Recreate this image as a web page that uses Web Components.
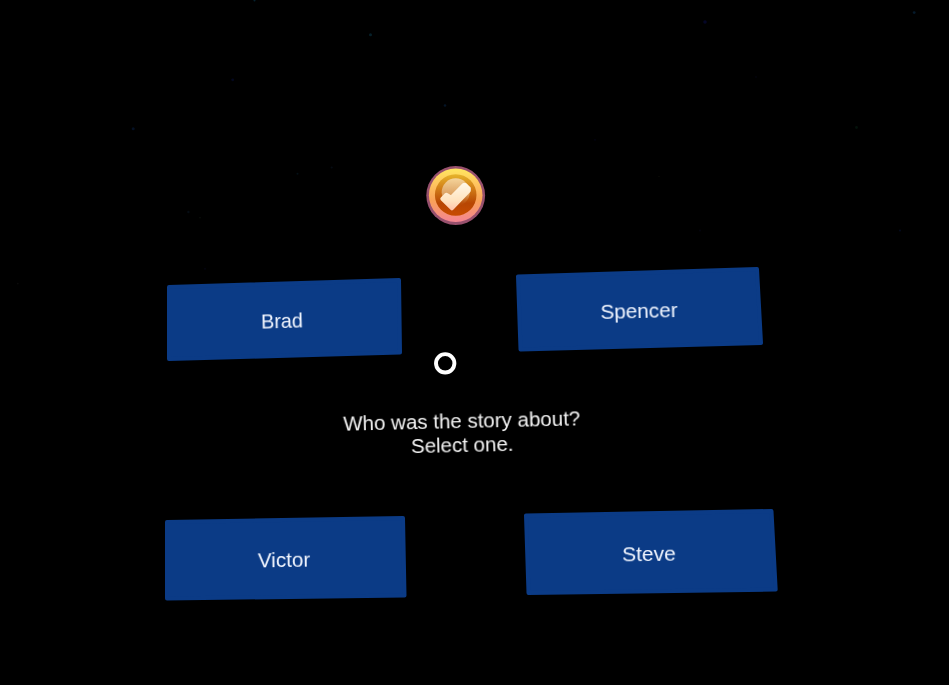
<!DOCTYPE html>
<html lang="en">
<head>
<meta charset="utf-8">
<title>Story quiz</title>
<style>
html, body { margin: 0; height: 100%; background: #000; overflow: hidden; }
</style>
</head>
<body>
<quiz-scene>
  <star-field></star-field>
  <check-badge style="left:425px;top:165px"></check-badge>
  <answer-panel points="168.5,287 398.5,280 399.5,352.5 168.5,359" cx="282" cy="321" size="19.8" tilt="-1.7">Brad</answer-panel>
  <answer-panel points="518,276.5 757,269 761,343 520.5,349.5" cx="638.5" cy="310.8" size="20.7" tilt="-1.5">Spencer</answer-panel>
  <gaze-cursor style="left:433px;top:351px"></gaze-cursor>
  <question-text style="left:312px;top:409.3px">
    <span>Who was the story about?</span>
    <span slot="hint">Select one.</span>
  </question-text>
  <answer-panel points="166.5,522 402.5,518 404,595.5 166.5,598.5" cx="284" cy="560" size="20.6" tilt="-.9">Victor</answer-panel>
  <answer-panel points="526,515.5 771.5,511 775.7,589.5 528.5,593" cx="649" cy="554" size="21" tilt="-.8">Steve</answer-panel>
</quiz-scene>
<script>
function define(name, html, setup) {
  customElements.define(name, class extends HTMLElement {
    connectedCallback() {
      if (this.shadowRoot) return;
      this.attachShadow({ mode: 'open' }).innerHTML = html;
      if (setup) setup(this, this.shadowRoot);
    }
  });
}

define('quiz-scene', `<style>
:host { display: block; position: relative; width: 949px; height: 685px; overflow: hidden; background: #000; color: #f2f6ff; font-family: "Liberation Sans", Arial, sans-serif; }
</style><slot></slot>`);

// Faint stars: x, y, radius, colour
const STARS = [[254.5,.5,1,'#05212e'],[370.5,34.8,1.5,'#06202a'],[232.7,79.8,1.4,'#040820'],[445,105.5,1.3,'#041426'],[133.2,128.7,1.5,'#041024'],[297.5,173.7,1,'#041016'],[331.7,167.5,1.1,'#050b12'],[188.4,212,1.2,'#050c13'],[200,217.7,.8,'#0c100c'],[205,268.8,1,'#04040f'],[17.8,283.6,.9,'#0b0b0b'],[705,22,1.8,'#040626'],[914.2,12.6,1.4,'#051a2b'],[756,77,.9,'#04040d'],[856.5,127.5,1.4,'#04120b'],[595,139.8,.9,'#040414'],[659,176.4,.7,'#0c0c08'],[700,230.5,1,'#04040e'],[900,230.5,1.1,'#040a1c']];
define('star-field', `<style>:host, svg { display: block; width: 100%; height: 100%; }</style>
<svg viewBox="0 0 949 685">${STARS.map(([x, y, r, c]) => `<circle cx="${x}" cy="${y}" r="${r}" fill="${c}"/>`).join('')}</svg>`);

// The panel box is the bounding box of its four corners; the label turns with the panel.
define('answer-panel', `<style>
:host { display: block; position: absolute; }
svg { display: block; width: 100%; height: 100%; overflow: visible; }
polygon { fill: #0b3b86; stroke: #0b3b86; stroke-width: 4; stroke-linejoin: round; filter: blur(.6px); }
.label { position: absolute; line-height: 24px; white-space: nowrap; filter: blur(.25px); }
</style><svg><polygon/></svg><div class="label"><slot></slot></div>`, (host, root) => {
  const pts = host.getAttribute('points').split(' ').map(p => p.split(',').map(Number));
  const xs = pts.map(p => p[0]), ys = pts.map(p => p[1]);
  const x = Math.min(...xs), y = Math.min(...ys), w = Math.max(...xs) - x, h = Math.max(...ys) - y;
  Object.assign(host.style, { left: x + 'px', top: y + 'px', width: w + 'px', height: h + 'px' });
  root.querySelector('svg').setAttribute('viewBox', `${x} ${y} ${w} ${h}`);
  root.querySelector('polygon').setAttribute('points', host.getAttribute('points'));
  Object.assign(root.querySelector('.label').style, {
    left: host.getAttribute('cx') - x + 'px', top: host.getAttribute('cy') - y + 'px',
    fontSize: host.getAttribute('size') + 'px',
    transform: `translate(-50%, -50%) rotate(${host.getAttribute('tilt')}deg)`
  });
});

define('question-text', `<style>
:host { display: block; position: absolute; width: 300px; text-align: center; font-size: 20.5px; line-height: 23.8px; color: #f4f4f4; transform: rotate(-1.3deg); filter: blur(.25px); }
div { white-space: nowrap; }
</style><div><slot></slot></div><div><slot name="hint"></slot></div>`);

define('gaze-cursor', `<style>:host { display: block; position: absolute; width: 24px; height: 24px; } svg { display: block; }</style>
<svg width="24" height="24"><circle cx="12.2" cy="12.3" r="9.2" fill="none" stroke="#fff" stroke-width="3.9"/></svg>`);

define('check-badge', `<style>:host { display: block; position: absolute; width: 60px; height: 60px; } svg { display: block; overflow: visible; filter: blur(.6px); }</style>
<svg width="60" height="60" viewBox="0 0 60 60">
<defs>
<linearGradient id="rim" x2="0" y2="1"><stop offset="0" stop-color="#ffe75f"/><stop offset=".3" stop-color="#ffc35f"/><stop offset=".6" stop-color="#f9a258"/><stop offset="1" stop-color="#f48494"/></linearGradient>
<linearGradient id="core" x2="0" y2="1"><stop offset="0" stop-color="#e6b52b"/><stop offset=".35" stop-color="#d17c18"/><stop offset=".7" stop-color="#b74603"/><stop offset="1" stop-color="#c74b00"/></linearGradient>
<linearGradient id="shine" x2="0" y2="1"><stop offset="0" stop-color="#f5d49b"/><stop offset=".55" stop-color="#dda365"/><stop offset="1" stop-color="#bd5510" stop-opacity="0"/></linearGradient>
<linearGradient id="tick" gradientUnits="userSpaceOnUse" x1="0" y1="18" x2="0" y2="46"><stop offset="0" stop-color="#fff8e8"/><stop offset=".65" stop-color="#ffe2bd"/><stop offset="1" stop-color="#ffc0a8"/></linearGradient>
</defs>
<circle cx="30.7" cy="30.5" r="29.4" fill="#97506d"/>
<circle cx="30.7" cy="30.3" r="26.8" fill="url(#rim)"/>
<circle cx="30.7" cy="30" r="20.8" fill="url(#core)"/>
<circle cx="30.7" cy="27.3" r="14" fill="url(#shine)"/>
<path d="M17.2 33.8 21.3 29.6 26.1 32.5 38.5 20 40.5 20 43.9 23.3 43.9 25.6 26.9 43.4Z" fill="url(#tick)" stroke="url(#tick)" stroke-width="3.8" stroke-linejoin="round"/>
</svg>`);
</script>
</body>
</html>
